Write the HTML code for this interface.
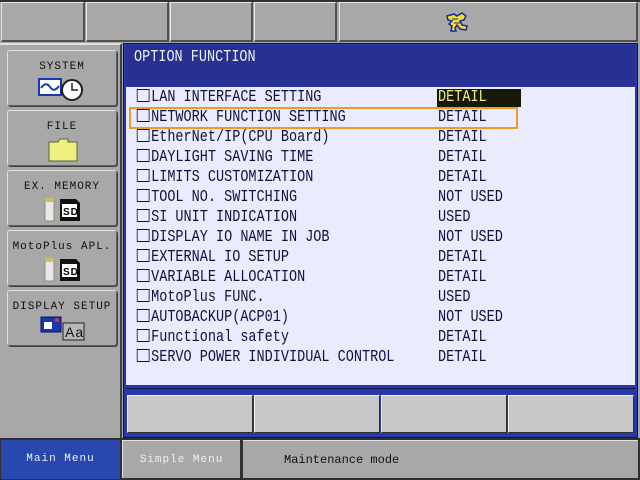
<!DOCTYPE html>
<html><head><style>
*{margin:0;padding:0;box-sizing:border-box}
body{width:640px;height:480px;background:#a8a8a8;position:relative;overflow:hidden;font-family:"Liberation Mono","DejaVu Sans Mono",monospace}
.a{position:absolute}
.tb{background:#a8a8a8;border-top:1px solid #e8e8e8;border-left:1px solid #e8e8e8;border-right:2px solid #505050;border-bottom:2px solid #505050}
.lb{background:#a8a8a8;border:1px solid #606060;border-top-color:#e0e0e0;border-left-color:#e0e0e0;border-radius:3px;box-shadow:1px 1px 0 #404040;text-align:center;font-size:11px;letter-spacing:1px;color:#101010}
.row{position:absolute;left:136px;height:20px;font-size:17px;color:#101040;transform-origin:0 0;transform:scaleX(0.795);white-space:pre;line-height:20px}
.cb{display:inline-block;width:16px;height:13px;border:1.3px solid #101040;vertical-align:-1px;margin-right:2px;margin-left:1px}
.bb{background:#c8c8c8;border:1px solid #303030;border-top-color:#f0f0f0;border-left-color:#f0f0f0}
</style></head><body>
<div class="a" style="left:0;top:0;width:640px;height:2px;background:#303030"></div>
<div class="a tb" style="left:1px;top:2px;width:84px;height:40px"></div>
<div class="a tb" style="left:86px;top:2px;width:83px;height:40px"></div>
<div class="a tb" style="left:170px;top:2px;width:83px;height:40px"></div>
<div class="a tb" style="left:254px;top:2px;width:83px;height:40px"></div>
<div class="a tb" style="left:339px;top:2px;width:299px;height:40px"></div>
<svg class="a" style="left:444px;top:11px" width="26" height="22"><path d="M3 5 L10 3 L13 5 L18 2 L22 5 L20 9 L16 10 L18 14 L23 15 L22 19 L16 18 L13 14 L11 17 L12 20 L7 20 L8 15 L5 13 L8 10 L4 9 Z" fill="#f0e028" stroke="#1828a0" stroke-width="1.5"/><path d="M8 8 H14 M10 12 H16" stroke="#1828a0" stroke-width="1"/></svg>
<div class="a" style="left:0;top:43px;width:122px;height:395px;background:#a8a8a8;border-right:2px solid #404040;border-top:2px solid #e0e0e0"></div>
<div class="a lb" style="left:7px;top:50px;width:110px;height:56px;padding-top:10px">SYSTEM
<svg class="a" style="left:30px;top:26px" width="50" height="24"><rect x="1" y="2" width="22" height="16" fill="#fff" stroke="#1838b0" stroke-width="2"/><path d="M3 11 Q8 4 12 10 T21 9" fill="none" stroke="#1838b0" stroke-width="2"/><circle cx="34" cy="13" r="10" fill="#fff" stroke="#202020" stroke-width="2"/><path d="M34 6 V13 H40" stroke="#202020" stroke-width="1.5" fill="none"/></svg></div>
<div class="a lb" style="left:7px;top:110px;width:110px;height:56px;padding-top:10px">FILE
<svg class="a" style="left:38px;top:26px" width="34" height="26"><path d="M3 5 H12 L14 2 H22 V5 H31 V24 H3 Z" fill="#f0f080" stroke="#606040"/></svg></div>
<div class="a lb" style="left:7px;top:170px;width:110px;height:56px;padding-top:10px">EX. MEMORY
<svg class="a" style="left:36px;top:26px" width="40" height="26"><rect x="1" y="3" width="9" height="21" fill="#e8e8e8" stroke="#909070"/><rect x="1" y="1" width="9" height="4" fill="#c8c060"/><path d="M16 2 H32 L36 6 V24 H16 Z" fill="#101010"/><rect x="18" y="7" width="15" height="13" fill="#fff"/><text x="19" y="18" font-size="10" font-weight="bold" font-family="Liberation Sans">SD</text></svg></div>
<div class="a lb" style="left:7px;top:230px;width:110px;height:56px;padding-top:10px">MotoPlus APL.
<svg class="a" style="left:36px;top:26px" width="40" height="26"><rect x="1" y="3" width="9" height="21" fill="#e8e8e8" stroke="#909070"/><rect x="1" y="1" width="9" height="4" fill="#c8c060"/><path d="M16 2 H32 L36 6 V24 H16 Z" fill="#101010"/><rect x="18" y="7" width="15" height="13" fill="#fff"/><text x="19" y="18" font-size="10" font-weight="bold" font-family="Liberation Sans">SD</text></svg></div>
<div class="a lb" style="left:7px;top:290px;width:110px;height:56px;padding-top:10px">DISPLAY SETUP
<svg class="a" style="left:32px;top:24px" width="50" height="28"><rect x="1" y="2" width="20" height="15" fill="#1838b0" stroke="#101060"/><rect x="4" y="7" width="8" height="7" fill="#fff"/><circle cx="17" cy="5" r="2" fill="#c04040"/><rect x="23" y="8" width="21" height="17" fill="#b8b8b8" stroke="#202020"/><text x="25" y="22" font-size="14" font-family="Liberation Sans" fill="#101010">Aa</text></svg></div>
<div class="a" style="left:123px;top:43px;width:515px;height:395px;background:#2838a8;border:1px solid #101050"></div>
<div class="a" style="left:126px;top:45px;width:509px;height:41px;background:#283090"></div>
<div class="a" style="left:134px;top:48px;font-size:17px;color:#f0f0f0;transform-origin:0 0;transform:scaleX(0.795);white-space:pre">OPTION FUNCTION</div>
<div class="a" style="left:126px;top:87px;width:509px;height:298px;background:#e8ecfc"></div>
<div class="a" style="left:437px;top:89px;width:84px;height:18px;background:#181808"></div>
<div class="a" style="left:129px;top:107px;width:389px;height:22px;border:2px solid #f09828"></div>
<div class="row" style="top:88px"><span class="cb"></span>LAN INTERFACE SETTING</div>
<div class="row" style="top:108px"><span class="cb"></span>NETWORK FUNCTION SETTING</div>
<div class="row" style="top:128px"><span class="cb"></span>EtherNet/IP(CPU Board)</div>
<div class="row" style="top:148px"><span class="cb"></span>DAYLIGHT SAVING TIME</div>
<div class="row" style="top:168px"><span class="cb"></span>LIMITS CUSTOMIZATION</div>
<div class="row" style="top:188px"><span class="cb"></span>TOOL NO. SWITCHING</div>
<div class="row" style="top:208px"><span class="cb"></span>SI UNIT INDICATION</div>
<div class="row" style="top:228px"><span class="cb"></span>DISPLAY IO NAME IN JOB</div>
<div class="row" style="top:248px"><span class="cb"></span>EXTERNAL IO SETUP</div>
<div class="row" style="top:268px"><span class="cb"></span>VARIABLE ALLOCATION</div>
<div class="row" style="top:288px"><span class="cb"></span>MotoPlus FUNC.</div>
<div class="row" style="top:308px"><span class="cb"></span>AUTOBACKUP(ACP01)</div>
<div class="row" style="top:328px"><span class="cb"></span>Functional safety</div>
<div class="row" style="top:348px"><span class="cb"></span>SERVO POWER INDIVIDUAL CONTROL</div>
<div class="row" style="left:438px;top:88px;color:#f0f080">DETAIL</div>
<div class="row" style="left:438px;top:108px">DETAIL</div>
<div class="row" style="left:438px;top:128px">DETAIL</div>
<div class="row" style="left:438px;top:148px">DETAIL</div>
<div class="row" style="left:438px;top:168px">DETAIL</div>
<div class="row" style="left:438px;top:188px">NOT USED</div>
<div class="row" style="left:438px;top:208px">USED</div>
<div class="row" style="left:438px;top:228px">NOT USED</div>
<div class="row" style="left:438px;top:248px">DETAIL</div>
<div class="row" style="left:438px;top:268px">DETAIL</div>
<div class="row" style="left:438px;top:288px">USED</div>
<div class="row" style="left:438px;top:308px">NOT USED</div>
<div class="row" style="left:438px;top:328px">DETAIL</div>
<div class="row" style="left:438px;top:348px">DETAIL</div>
<div class="a" style="left:126px;top:388px;width:509px;height:1px;background:#101050"></div>
<div class="a bb" style="left:127px;top:395px;width:126px;height:38px"></div>
<div class="a bb" style="left:254px;top:395px;width:126px;height:38px"></div>
<div class="a bb" style="left:381px;top:395px;width:126px;height:38px"></div>
<div class="a bb" style="left:508px;top:395px;width:126px;height:38px"></div>
<div class="a" style="left:0;top:438px;width:640px;height:42px;background:#303030"></div>
<div class="a" style="left:1px;top:440px;width:119px;height:39px;background:#2848b0;color:#f0f0f0;font-size:11px;letter-spacing:1px;text-align:center;line-height:38px">Main Menu</div>
<div class="a" style="left:122px;top:440px;width:118px;height:38px;background:#a8a8a8;border-top:1px solid #e0e0e0;border-left:1px solid #e0e0e0;color:#f0f0f0;font-size:11px;letter-spacing:1px;text-align:center;line-height:38px">Simple Menu</div>
<div class="a" style="left:243px;top:440px;width:395px;height:38px;background:#a8a8a8;border-top:1px solid #e0e0e0;color:#101010;font-size:12px;line-height:38px;padding-left:41px">Maintenance mode</div>
</body></html>
